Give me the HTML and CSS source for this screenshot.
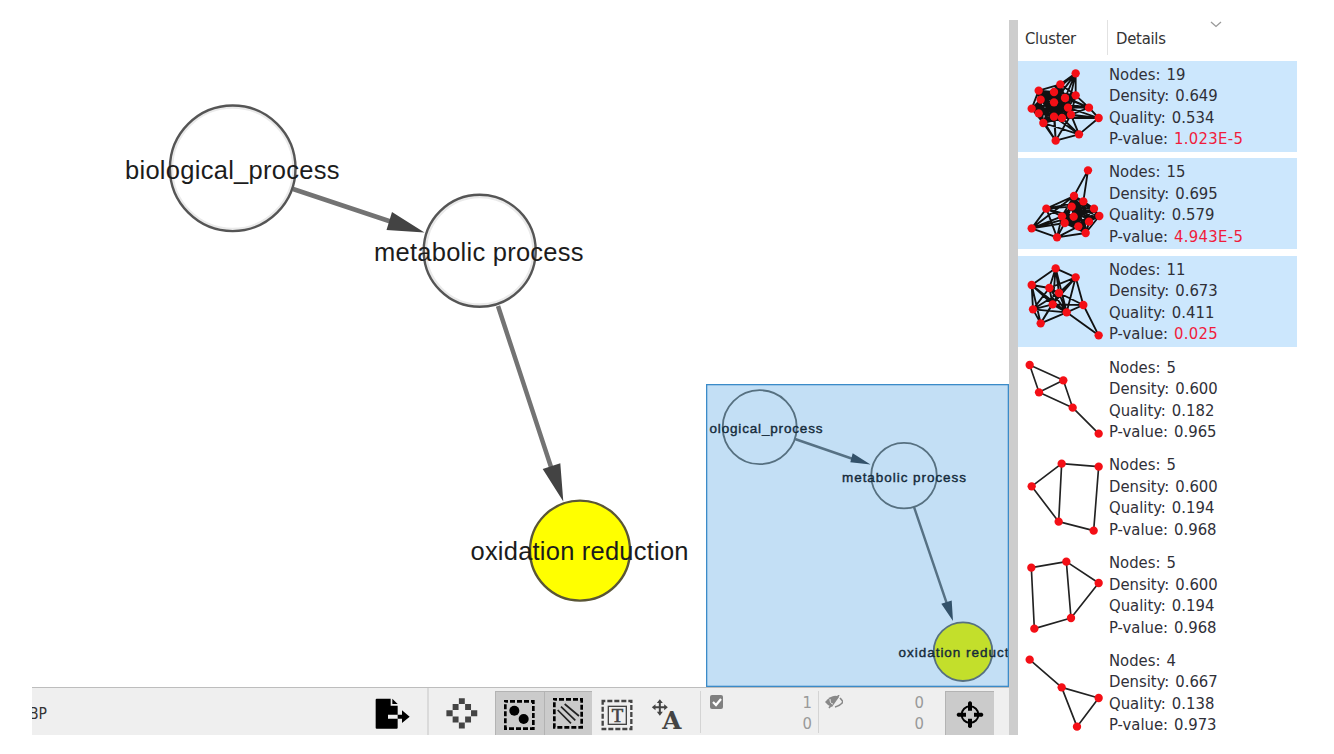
FILE: index.html
```html
<!DOCTYPE html>
<html lang="en">
<head>
<meta charset="utf-8">
<title>Cluster network view</title>
<link rel="stylesheet" href="styles.css">
</head>
<body>
<main class="app">
  <section class="network">
    <div class="canvas">
      <svg class="graph" viewBox="32 20 977 667">
        <g class="edges">
          <path d="M293 189L392 222M498 306L552 470"/>
        </g>
        <g class="arrows">
          <path d="M392 212L424.5 232.5L386.5 230ZM542.7 469L560.3 463.3L563.3 501.5Z"/>
        </g>
        <g class="halo">
          <circle cx="232.7" cy="168.3" r="61"/>
          <circle cx="479.7" cy="250.8" r="54"/>
        </g>
        <circle class="node" cx="232.7" cy="168.3" r="62.8"/>
        <circle class="node" cx="479.7" cy="250.8" r="56"/>
        <circle class="node picked" cx="580" cy="550.6" r="50"/>
        <g class="labels">
          <text x="125" y="178.5" textLength="214.5">biological_process</text>
          <text x="374" y="261" textLength="209.5">metabolic process</text>
          <text x="470.5" y="560" textLength="218">oxidation reduction</text>
        </g>
      </svg>
      <svg class="overview" viewBox="706 384 303 303">
        <path class="mini-edge" d="M795 439L853 459M914 507L947 604"/>
        <path class="mini-arrow" d="M852.7 453.3L870.5 464.5L850.3 462.3ZM941.3 603.7L951.7 600.5L953 621Z"/>
        <circle class="mini-node" cx="759.7" cy="427.2" r="37"/>
        <circle class="mini-node" cx="904" cy="475.6" r="32.8"/>
        <circle class="mini-node mini-picked" cx="963" cy="651.7" r="29.3"/>
        <g class="mini-labels">
          <text x="709.5" y="432.5" textLength="113">ological_process</text>
          <text x="842" y="481.5" textLength="124">metabolic process</text>
          <text x="898.5" y="656.8" textLength="110">oxidation reduct</text>
        </g>
        <rect class="frame" x="706.5" y="384.5" width="302" height="302"/>
      </svg>
    </div>
    <div class="toolbar">
      <div class="title"><span>BP</span></div>
      <div class="tool export">
        <svg viewBox="3 24 198 141"><path d="M50 56H92V77H113V104H84V116H113V143Q113 146 110 146H50Q47 146 47 143V59Q47 56 50 56ZM97 56L113 72H97ZM113 104H126V91L149 110L126 129V116H113Z"/></svg>
      </div>
      <div class="tool fit">
        <svg viewBox="204 24 201 141"><path fill="#444" d="M295 54h18v18h-18zM276 72h18v18h-18zM314 72h18v18h-18zM257 91h19v18h-19zM332 91h19v18h-19zM276 110h18v18h-18zM314 110h18v18h-18zM295 128h18v18h-18z"/></svg>
      </div>
      <div class="tool pressed">
        <svg viewBox="405 33 147 132"><rect class="dash" x="436" y="64" width="84" height="82"/><circle cx="463" cy="92" r="15"/><circle cx="491" cy="117" r="15"/></svg>
      </div>
      <div class="tool pressed second">
        <svg viewBox="552 33 144 132"><rect class="dash" x="583" y="58" width="82" height="84"/><path class="hatch" d="M593 90L633 130M603 80L646 121M614 72L657 108"/></svg>
      </div>
      <div class="tool note">
        <svg viewBox="696 24 147 141"><rect class="dash muted" x="728" y="63" width="86" height="84"/><rect class="inner" x="745" y="79" width="54" height="54"/><text class="letter-t" x="772" y="125">T</text></svg>
      </div>
      <div class="tool label-move">
        <svg viewBox="843 24 174 141"><path fill="#444" d="M898 58L907 69H901V79H911V73L922 82L911 91V85H901V95H907L898 107L889 95H895V85H885V91L874 82L885 73V79H895V69H889Z"/><text class="letter-a" x="934" y="146">A</text></svg>
      </div>
      <div class="stat first">
        <svg viewBox="0 0 14 14"><rect width="13" height="14" rx="2" fill="#808080"/><path d="M3 7L6 10L11 4" fill="none" stroke="#fff" stroke-width="2.2"/></svg>
        <span>1<br>0</span>
      </div>
      <div class="stat">
        <svg class="eye" viewBox="0 0 18 14"><path d="M0 7Q8 -2 14 2L7 12Q2 10 0 7Z" fill="#888"/><path d="M4 13L14 0M15 3Q17 5 18 7Q15 11 10 12" fill="none" stroke="#888" stroke-width="1.6"/><path d="M5 4Q5 9 8 9" fill="none" stroke="#eee"/></svg>
        <span>0<br>0</span>
      </div>
      <div class="tool pressed target">
        <svg viewBox="766 33 147 132"><circle cx="841" cy="104" r="25" fill="none" stroke="#000" stroke-width="6"/><path d="M835 68Q841 60 847 68V92H835ZM835 140Q841 148 847 140V116H835ZM805 98Q797 104 805 110H829V98ZM877 98Q885 104 877 110H853V98Z"/></svg>
      </div>
    </div>
  </section>
  <div class="splitter"></div>
  <aside class="results">
    <header class="head">
      <span class="col-cluster">Cluster</span>
      <span class="col-details">Details</span>
      <svg class="chevron" viewBox="0 0 12 7"><path d="M1 1L6 5.5L11 1" fill="none" stroke="#999" stroke-width="1.3"/></svg>
    </header>
    <div class="rows" id="rows"></div>
  </aside>
</main>
<script src="clusters.js"></script>
</body>
</html>
```
FILE: styles.css
```css
body {
  margin: 0;
  background: #fff;
  font-family: "DejaVu Sans Condensed", "DejaVu Sans", sans-serif;
}

.app {
  display: flex;
  width: 1265px;
  height: 715px;
  padding: 20px 0 0 32px;
}

svg {
  display: block;
}

.network {
  display: flex;
  flex-direction: column;
  width: 977px;
}

.canvas {
  position: relative;
  height: 667px;
}

.graph {
  width: 977px;
  height: 667px;
}

.edges path {
  stroke: #737373;
  stroke-width: 4.5;
  fill: none;
}

.arrows path {
  fill: #434343;
}

.halo circle {
  fill: #fff;
  stroke: #eaeaea;
  stroke-width: 3;
}

.node {
  fill: none;
  stroke: #555;
  stroke-width: 2.4;
}

.picked {
  fill: #ff0;
  stroke: #5a5636;
}

.labels text {
  font: 25.5px "Liberation Sans", Arial, sans-serif;
  fill: #1c1c1c;
}

.overview {
  position: absolute;
  right: 0;
  bottom: 0;
  width: 303px;
  height: 303px;
  background: #c3dff5;
}

.frame {
  fill: none;
  stroke: #3b8bc8;
  stroke-width: 1.6;
}

.mini-edge {
  stroke: #567184;
  stroke-width: 2.4;
}

.mini-arrow {
  fill: #33526a;
}

.mini-node {
  fill: none;
  stroke: #567080;
  stroke-width: 1.8;
}

.mini-picked {
  fill: #c3df2b;
}

.mini-labels text {
  font: 13.5px "Liberation Sans", Arial, sans-serif;
  fill: #142a3a;
  stroke: #142a3a;
  stroke-width: 0.4;
}

.toolbar {
  display: flex;
  align-items: flex-end;
  box-sizing: border-box;
  height: 48px;
  border-top: 1px solid #bdbdbd;
  background: #efefef;
  overflow: hidden;
}

.title {
  width: 329px;
  height: 47px;
  overflow: hidden;
  font-size: 15.5px;
  line-height: 53px;
  color: #333;
}

.title span {
  margin-left: -3px;
}

.tool {
  box-sizing: border-box;
  height: 47px;
}

.tool svg {
  width: 100%;
  height: 100%;
}

.export {
  width: 66px;
}

.fit {
  width: 68px;
  border-left: 2px solid #dadada;
}

.pressed {
  width: 49px;
  height: 44px;
  background: #cbcbcb;
  box-shadow: inset 1px 1px #b3b3b3;
}

.second {
  width: 48px;
}

.note {
  width: 49px;
}

.label-move {
  width: 59px;
}

.dash {
  fill: none;
  stroke: #000;
  stroke-width: 8;
  stroke-dasharray: 15 6;
  stroke-dashoffset: 7;
}

.muted {
  stroke: #444;
  stroke-width: 7;
}

.hatch {
  fill: none;
  stroke: #222;
  stroke-width: 5;
}

.inner {
  fill: none;
  stroke: #444;
  stroke-width: 4;
}

.letter-t {
  font: 56px "Liberation Serif", serif;
  text-anchor: middle;
  fill: #444;
  stroke: #444;
  stroke-width: 2;
}

.letter-a {
  font: bold 74px "DejaVu Serif", serif;
  text-anchor: middle;
  fill: #444;
}

.stat {
  display: flex;
  justify-content: space-between;
  box-sizing: border-box;
  width: 117px;
  height: 42px;
  margin-bottom: 2px;
  padding: 0 11px 0 6px;
  border-left: 1px solid #d4d4d4;
  font-size: 16.5px;
  line-height: 21px;
  color: #999;
}

.stat span {
  padding-top: 1px;
}

.stat svg {
  width: 14px;
  height: 14px;
  margin-top: 4px;
}

.stat .eye {
  width: 18px;
}

.first {
  width: 118px;
  padding: 0 6px 0 9px;
}

.target {
  margin-left: 10px;
}

.splitter {
  width: 9px;
  background: #cdcdcd;
}

.results {
  width: 279px;
  overflow: hidden;
}

.head {
  display: flex;
  box-sizing: border-box;
  height: 40.6px;
  font-size: 16.5px;
  line-height: 37px;
  letter-spacing: -0.25px;
  color: #333;
}

.col-cluster {
  box-sizing: border-box;
  width: 90px;
  height: 35px;
  padding-left: 7px;
  border-right: 1px solid #e2e2e2;
}

.col-details {
  width: 102px;
  box-sizing: border-box;
  padding-left: 8px;
}

.chevron {
  width: 12px;
  height: 7px;
  margin-top: 1px;
}

.rows {
  display: flex;
  flex-direction: column;
  gap: 6.7px;
}

.row {
  display: flex;
  height: 91px;
}

.selected {
  background: #cce7fd;
}

.thumb {
  width: 91px;
  height: 91px;
  flex: none;
  overflow: visible;
}

.thumb path {
  stroke: #222;
  stroke-width: 5;
  fill: none;
}

.selected .thumb path {
  stroke: #111;
  stroke-width: 5.5;
}

.thumb circle {
  fill: #f40f16;
}

.info {
  padding-top: 3px;
  font-size: 16.5px;
  line-height: 21.5px;
  letter-spacing: 0;
  word-spacing: 1.3px;
  white-space: nowrap;
  color: #303038;
}

.significant {
  letter-spacing: 0.3px;
  color: #f01c3c;
}
```
FILE: clusters.js
```js
// Joins every pair of the listed nodes.
function clique(ids) {
  const out = [];
  ids.forEach((a, i) => ids.slice(i + 1).forEach(b => out.push([a, b])));
  return out;
}

// Joins one node to each of the others.
function fan(a, ids) {
  return ids.map(b => [a, b]);
}

const clusters = [
  {
    top: 151, n: 19, d: "0.649", q: "0.534", p: "1.023E-5", sel: true,
    nodes: [[212,188],[166,221],[101,240],[147,244],[212,254],[180,262],[107,267],[147,275],[80,294],[101,308],[189,291],[252,291],[147,318],[171,322],[198,312],[281,322],[115,337],[222,371],[152,390]],
    edges: [...clique([1,2,3,4,5,6,7,8,9,10,12,13,14,16]), ...fan(0,[1,3,4,5,7,10]), ...fan(11,[3,4,5,7,10,14,15]), ...fan(15,[10,12,13,14,17]), ...fan(17,[10,12,13,14,16,18]), ...fan(18,[7,9,12,14,16])]
  },
  {
    top: 25, n: 15, d: "0.695", q: "0.579", p: "4.943E-5", sel: true,
    nodes: [[249,62],[207,139],[235,155],[124,177],[200,171],[267,177],[171,200],[206,201],[283,199],[179,220],[252,216],[220,230],[242,250],[80,236],[156,263]],
    edges: [...clique([1,2,4,5,6,7,8,9,10,11,12]), ...fan(0,[1,2]), ...fan(3,[1,2,4,6,7,13,14]), ...fan(13,[1,6,7,9,14]), ...fan(14,[6,9,11,12])]
  },
  {
    top: 18, n: 11, d: "0.673", q: "0.411", p: "0.025", sel: true,
    nodes: [[152,55],[212,82],[80,105],[133,114],[162,129],[143,163],[84,178],[235,165],[185,187],[107,220],[281,256]],
    edges: [...fan(0,[1,2,3,4,5,8]), ...fan(1,[3,4,5,7,8]), ...fan(2,[3,5,6,8,9]), ...fan(3,[4,5,6,8]), ...fan(4,[5,6,7,8,9]), ...fan(5,[6,7,8,9]), ...fan(6,[8,9]), ...fan(8,[7,9,10]), [7,10]]
  },
  {
    top: 11, n: 5, d: "0.600", q: "0.182", p: "0.965",
    nodes: [[74,44],[175,90],[102,126],[203,172],[281,250]],
    edges: [[0,1],[0,2],[1,2],[1,3],[2,3],[3,4]]
  },
  {
    top: 304, n: 5, d: "0.600", q: "0.194", p: "0.968",
    nodes: [[170,342],[281,351],[80,410],[161,516],[266,543]],
    edges: [[0,1],[0,2],[0,3],[2,3],[3,4],[1,4]]
  },
  {
    top: 12, n: 5, d: "0.600", q: "0.194", p: "0.968",
    nodes: [[79,68],[184,50],[281,114],[198,219],[88,251]],
    edges: [[0,1],[1,2],[1,3],[2,3],[3,4],[0,4]]
  },
  {
    top: 305, n: 4, d: "0.667", q: "0.138", p: "0.973",
    nodes: [[74,343],[170,426],[281,458],[216,544]],
    edges: [[0,1],[1,2],[1,3],[2,3]]
  }
];

document.getElementById("rows").innerHTML = clusters.map(c => {
  const lines = c.edges.map(([a, b]) => `M${c.nodes[a]}L${c.nodes[b]}`).join("");
  const dots = c.nodes.map(([x, y]) => `<circle cx="${x}" cy="${y}" r="12.5"/>`).join("");
  return `<div class="row${c.sel ? " selected" : ""}">
    <svg class="thumb" viewBox="39 ${c.top} 273 273"><path d="${lines}"/>${dots}</svg>
    <div class="info">Nodes: ${c.n}<br>Density: ${c.d}<br>Quality: ${c.q}<br>P-value: <span class="${c.sel ? "significant" : ""}">${c.p}</span></div>
  </div>`;
}).join("");
```
